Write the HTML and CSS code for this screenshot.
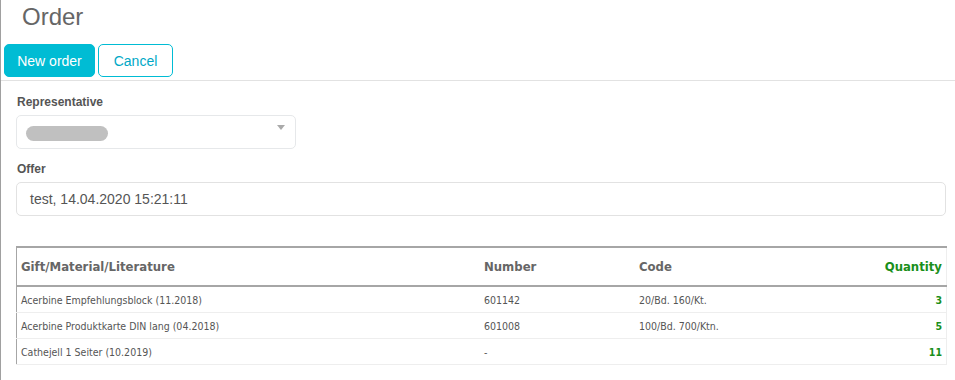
FILE: index.html
```html
<!DOCTYPE html>
<html>
<head>
<meta charset="utf-8">
<link rel="stylesheet" href="styles.css">
</head>
<body>
<div class="page">
  <h1 class="title">Order</h1>
  <div class="toolbar">
    <button class="btn btn-primary">New order</button>
    <button class="btn btn-outline">Cancel</button>
  </div>
  <div class="content">
    <div class="field">
      <label class="label">Representative</label>
      <div class="select">
        <span class="blur"></span>
        <span class="caret"></span>
      </div>
    </div>
    <div class="field">
      <label class="label">Offer</label>
      <div class="input">test, 14.04.2020 15:21:11</div>
    </div>
    <table class="grid">
      <thead>
        <tr>
          <th class="c-name">Gift/Material/Literature</th>
          <th class="c-num">Number</th>
          <th class="c-code">Code</th>
          <th class="c-qty">Quantity</th>
        </tr>
      </thead>
      <tbody>
        <tr><td>Acerbine Empfehlungsblock (11.2018)</td><td>601142</td><td>20/Bd. 160/Kt.</td><td class="c-qty">3</td></tr>
        <tr><td>Acerbine Produktkarte DIN lang (04.2018)</td><td>601008</td><td>100/Bd. 700/Ktn.</td><td class="c-qty">5</td></tr>
        <tr><td>Cathejell 1 Seiter (10.2019)</td><td>-</td><td></td><td class="c-qty">11</td></tr>
      </tbody>
    </table>
  </div>
</div>
</body>
</html>
```
FILE: styles.css
```css
html, body { margin: 0; padding: 0; background: #fff; }
body { font-family: "Liberation Sans", Arial, sans-serif; color: #555; }
.page {
  border-left: 1px solid #a0a0a0;
  min-height: 380px;
  box-sizing: border-box;
}
.title {
  margin: 0;
  padding: 4px 0 0 21px;
  height: 40px;
  box-sizing: border-box;
  font-weight: normal;
  font-size: 24px;
  line-height: 26px;
  color: #666;
}
.toolbar {
  display: flex;
  gap: 3px;
  padding: 4px 0 3px 3px;
  border-bottom: 1px solid #e2e2e2;
}
.btn {
  font-family: "Liberation Sans", Arial, sans-serif;
  font-size: 14px;
  height: 33px;
  border-radius: 5px;
  padding: 0 12px;
  box-sizing: border-box;
  cursor: pointer;
}
.btn-primary {
  background: #00bcd4;
  border: 1px solid #00bcd4;
  color: #fff;
  width: 91px;
}
.btn-outline {
  background: #fff;
  border: 1px solid #00bcd4;
  color: #00a8c6;
  width: 75px;
}
.content {
  padding: 14px 9px 0 15px;
}
.field { display: flex; flex-direction: column; }
.label {
  font-size: 12px;
  font-weight: bold;
  color: #555;
  line-height: 14px;
  margin: 0 0 6px 1px;
}
.select {
  width: 280px;
  height: 34px;
  box-sizing: border-box;
  border: 1px solid #e6e8ea;
  border-radius: 5px;
  display: flex;
  align-items: center;
  justify-content: space-between;
  padding: 0 10px 0 9px;
  margin-bottom: 13px;
}
.blur {
  width: 82px;
  height: 15px;
  border-radius: 8px;
  background: #c0c0c0;
  margin-top: 2px;
}
.caret {
  width: 0; height: 0;
  border-left: 4px solid transparent;
  border-right: 4px solid transparent;
  border-top: 5px solid #aaa;
  margin-top: -10px;
}
.input {
  height: 34px;
  box-sizing: border-box;
  border: 1px solid #e2e2e2;
  border-radius: 5px;
  padding: 0 13px;
  display: flex;
  align-items: center;
  font-size: 14px;
  color: #555;
}
.grid {
  margin-top: 30px;
  width: 931px;
  border-collapse: collapse;
  font-family: "DejaVu Sans Condensed", "DejaVu Sans", sans-serif;
  font-size: 10.5px;
  color: #555;
}
.grid th {
  text-align: left;
  font-size: 13px;
  font-weight: bold;
  color: #666;
  height: 37px;
  padding: 0 4px;
  border-top: 2px solid #a6a6a6;
  border-bottom: 2px solid #a6a6a6;
}
.grid th:first-child { border-left: 1px solid #a6a6a6; }
.grid th:last-child, .grid td:last-child { border-right: 1px solid #eee; }
.grid td {
  height: 25px;
  padding: 0 4px;
  border-bottom: 1px solid #eee;
}
.grid td:first-child { border-left: 1px solid #a6a6a6; }
.grid .c-name { width: 455px; }
.grid .c-num { width: 147px; }
.grid .c-qty { text-align: right; color: #1a8f1a; font-weight: bold; }
```
